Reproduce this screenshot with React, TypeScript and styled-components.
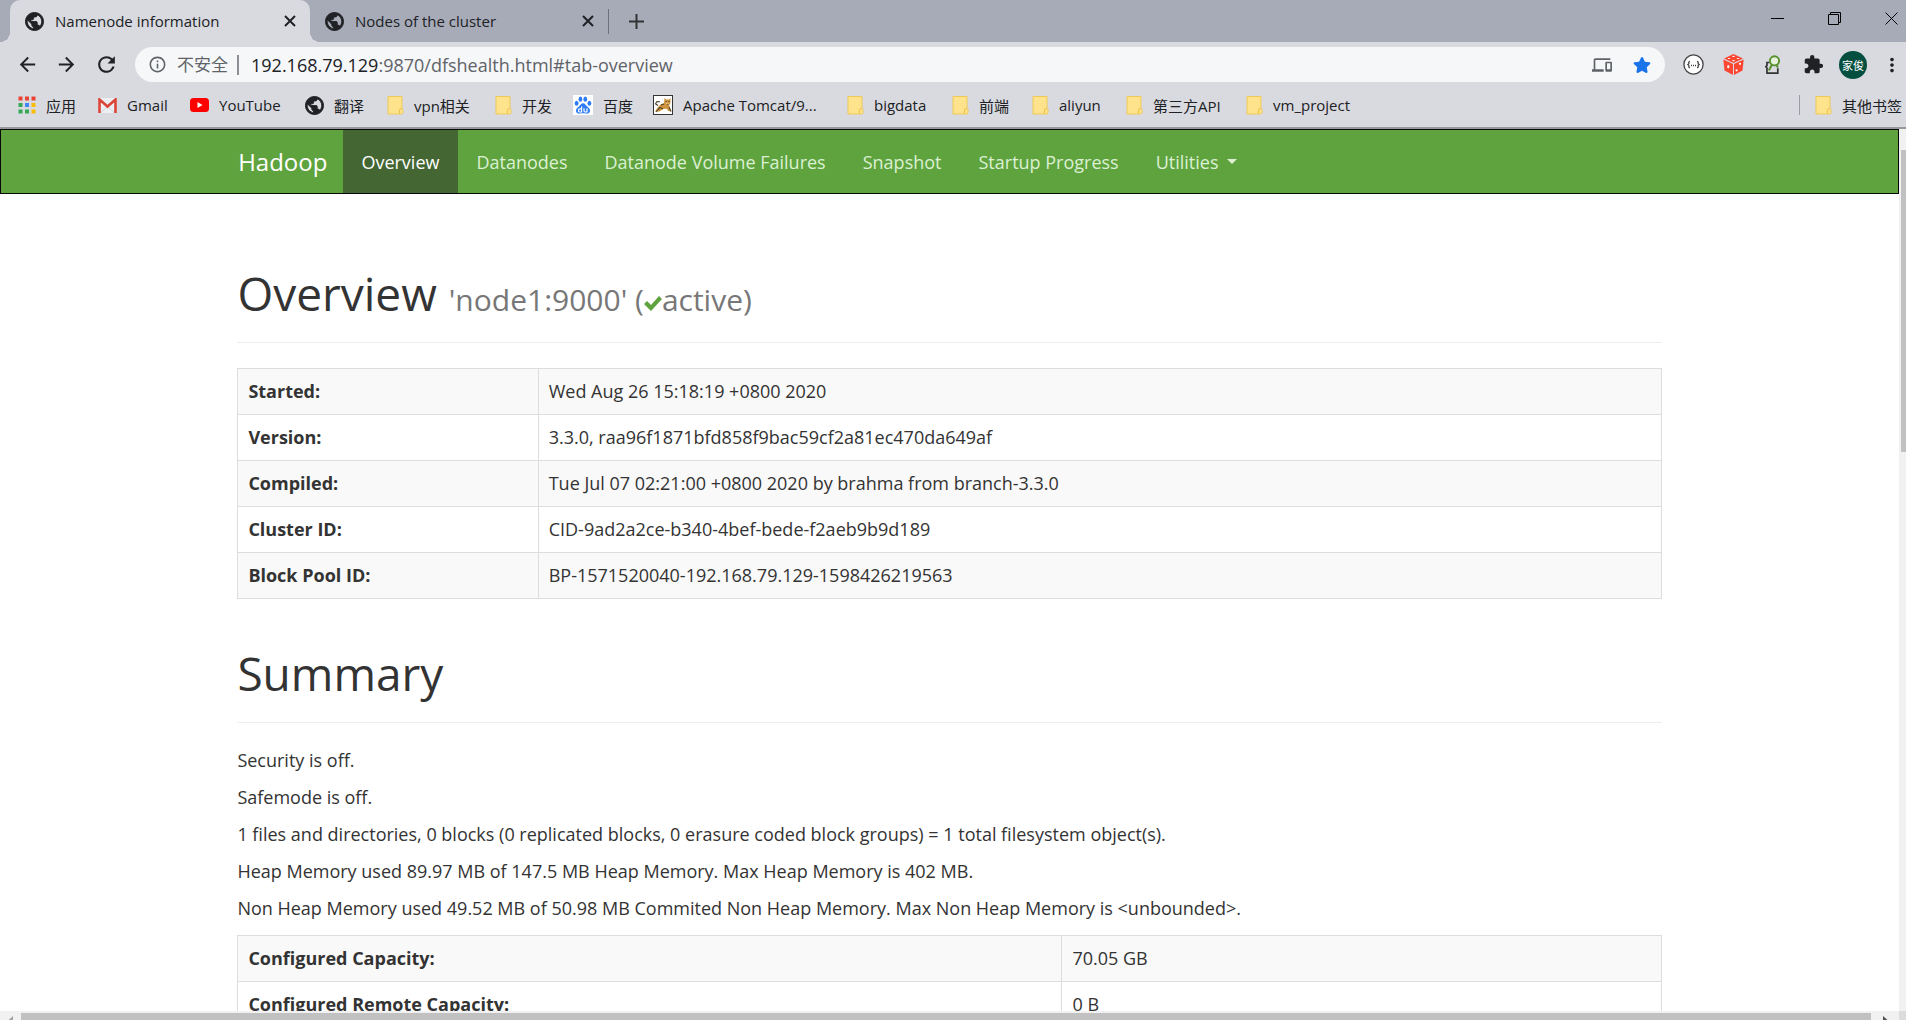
import React from 'react';
import styled, { createGlobalStyle } from 'styled-components';
import { FaStar } from 'react-icons/fa';
import { MdDevices, MdRefresh, MdArrowBack, MdArrowForward, MdInfoOutline, MdMoreVert, MdExtension } from 'react-icons/md';

const ui = `"Open Sans", "Noto Sans CJK SC", sans-serif`;

const Global = createGlobalStyle`
  *, *::before, *::after { box-sizing: border-box; }
  html, body { margin: 0; height: 100%; overflow: hidden; }
  body { font-family: ${ui}; color: #333; background: #fff; }
  #root { height: 100%; }
  button { border: 0; padding: 0; background: none; color: inherit; font: inherit; display: inline-flex; align-items: center; justify-content: center; }
  a { color: inherit; text-decoration: none; }
  svg { display: block; flex: none; }
`;

const Window = styled.div`
  display: flex;
  flex-direction: column;
  height: 100vh;
`;

const TabStrip = styled.header`
  display: flex;
  height: 42px;
  padding-left: 10px;
  background: #a7abb8;
  flex: none;
`;

const Tab = styled.div<{ $active?: boolean }>`
  position: relative;
  display: flex;
  align-items: center;
  width: ${p => (p.$active ? 300 : 298)}px;
  padding: 0 14px 0 15px;
  gap: 11px;
  color: #202124;
  font-size: 15px;
  border-radius: 10px 10px 0 0;
  background: ${p => (p.$active ? '#d8dadf' : 'transparent')};
  ${p =>
    p.$active &&
    `&::before, &::after {
      content: '';
      position: absolute;
      bottom: 0;
      width: 10px;
      height: 10px;
    }
    &::before { left: -10px; background: radial-gradient(circle at 0 0, transparent 10px, #d8dadf 10px); }
    &::after { right: -10px; background: radial-gradient(circle at 100% 0, transparent 10px, #d8dadf 10px); }`}
`;

const TabTitle = styled.span`
  flex: 1;
  white-space: nowrap;
`;

const TabDivider = styled.span`
  width: 1px;
  height: 25px;
  margin: 9px 20px 0 0;
  background: #6c707b;
`;

const WindowControls = styled.div`
  display: flex;
  align-items: center;
  margin-left: auto;
  padding: 0 8px 6px 0;
  gap: 44px;
  color: #000;
`;

const Toolbar = styled.div`
  display: flex;
  align-items: center;
  height: 45px;
  padding: 0 3px 0 16px;
  background: #d8dadf;
  color: #202124;
  flex: none;
`;

const NavButtons = styled.div`
  display: flex;
  gap: 16px;
  margin-right: 16px;
`;

const AddressBar = styled.form`
  display: flex;
  align-items: center;
  flex: 1;
  height: 35px;
  padding: 0 14px 0 13px;
  border-radius: 18px;
  background: #f6f7f9;
  color: #5f6368;
  font-size: 18px;
`;

const Insecure = styled.span`
  margin-left: 10px;
  padding-right: 9px;
  border-right: 2px solid #8b8e93;
  font-size: 17px;
  line-height: 20px;
`;

const Address = styled.div`
  position: relative;
  flex: 1;
  height: 24px;
  margin-left: 12px;
  line-height: 24px;
`;

const AddressText = styled.div`
  white-space: pre;
  b { color: #202124; font-weight: 400; }
`;

const AddressInput = styled.input`
  position: absolute;
  inset: 0;
  width: 100%;
  border: 0;
  padding: 0;
  outline: 0;
  background: transparent;
  color: transparent;
  font: inherit;
`;

const AddressActions = styled.div`
  display: flex;
  gap: 21px;
`;

const Extensions = styled.div`
  display: grid;
  grid-template-columns: repeat(5, 40px) 30px;
  place-items: center;
  margin-left: 8px;
  & > :last-child { justify-self: end; }
`;

const Avatar = styled.button`
  && {
    width: 28px;
    height: 28px;
    border-radius: 50%;
    background: #044f40;
    color: #fff;
    font-size: 11px;
  }
`;

const Bookmarks = styled.nav`
  display: flex;
  align-items: center;
  height: 40px;
  padding: 0 0 4px 18px;
  background: #d8dadf;
  color: #202124;
  font-size: 15px;
  white-space: nowrap;
  flex: none;
`;

const Bookmark = styled.a<{ $width?: number }>`
  display: flex;
  align-items: center;
  gap: 10px;
  width: ${p => p.$width}px;
  flex: none;
`;

const OtherBookmarks = styled.a`
  display: flex;
  align-items: center;
  gap: 10px;
  height: 20px;
  margin-left: auto;
  padding: 0 4px 0 15px;
  border-left: 1px solid #9a9da5;
`;

const Viewport = styled.div`
  display: grid;
  grid-template: minmax(0, 1fr) 9px / minmax(0, 1fr) 7px;
  flex: 1;
  min-height: 0;
  border-top: 2px solid #98989c;
`;

const Page = styled.div`
  overflow: hidden;
`;

const ScrollY = styled.div`
  padding: 21px 0 0 2px;
  background: #f1f1f1;
`;

const ThumbY = styled.div`
  height: 35.1%;
  background: #c1c1c1;
`;

const ScrollX = styled.div`
  display: grid;
  grid-template-columns: 21px 1fr 28px;
  padding-top: 2px;
  background: #f1f1f1;
  overflow: hidden;
`;

const Arrow = styled.svg<{ $color: string }>`
  justify-self: center;
  margin-top: 3px;
  fill: ${p => p.$color};
`;

const ThumbX = styled.div`
  background: #c1c1c1;
`;

const Corner = styled.div`
  background: #dcdcdc;
`;

const Navbar = styled.nav`
  border: 1px solid #080808;
  background: #5fa33e;
`;

const Container = styled.div`
  width: 75%;
  min-width: 1000px;
  margin: 0 auto;
`;

const NavRow = styled(Container)`
  display: flex;
  height: 63px;
  font-size: 18px;
`;

const Brand = styled.a`
  display: flex;
  align-items: center;
  padding-right: 16px;
  color: #fff;
  font-size: 24px;
`;

const NavLink = styled.a<{ $active?: boolean }>`
  display: flex;
  align-items: center;
  gap: 8px;
  padding: 0 19px 0 18px;
  white-space: nowrap;
  color: ${p => (p.$active ? '#fff' : '#dcf0d3')};
  background: ${p => (p.$active ? '#446633' : 'transparent')};
`;

const Caret = styled.span`
  border: 5px solid transparent;
  border-top-color: currentColor;
  border-bottom: 0;
`;

const Section = styled.section`
  padding-top: 44px;
`;

const OverviewSection = styled(Section)`
  padding-top: 69px;
`;

const PageHeader = styled.header`
  padding-bottom: 19px;
  margin-bottom: 25px;
  border-bottom: 1px solid #eee;
`;

const Heading = styled.h1`
  margin: 0;
  font-size: 46px;
  font-weight: 400;
  line-height: 60px;
  small { color: #777; font-size: 30px; line-height: 30px; }
`;

const Check = styled.svg`
  display: inline-block;
`;

const Table = styled.table`
  width: 100%;
  table-layout: fixed;
  border-collapse: collapse;
  font-size: 18px;
  line-height: 25px;
  th, td {
    height: 46px;
    padding: 10px;
    border: 1px solid #ddd;
    text-align: left;
    white-space: nowrap;
  }
  tr:nth-child(odd) { background: #f9f9f9; }
`;

const KeyHead = styled.th<{ $share: number }>`
  width: ${p => p.$share}%;
  font-weight: 700;
`;

const Summary = styled.div`
  display: grid;
  gap: 12px;
  margin-bottom: 14px;
`;

const Para = styled.p`
  margin: 0;
  font-size: 18px;
  line-height: 25px;
`;

const Globe = () => (
  <svg width="19" height="19" viewBox="1.500 1.500 21 21">
    <path
      fill="#202124"
      stroke="#202124"
      strokeWidth="1"
      d="M12 2C6.480 2 2 6.480 2 12s4.480 10 10 10 10-4.480 10-10S17.520 2 12 2zm-1 17.930c-3.950-.490-7-3.850-7-7.930 0-.620.080-1.210.210-1.790L9 15v1c0 1.100.900 2 2 2v1.930zm6.900-2.540c-.260-.810-1-1.390-1.900-1.390h-1v-3c0-.550-.450-1-1-1H8v-2h2c.550 0 1-.450 1-1V7h2c1.100 0 2-.900 2-2v-.410c2.930 1.190 5 4.060 5 7.410 0 2.080-.800 3.970-2.100 5.390z"
    />
  </svg>
);

const Folder = () => (
  <svg width="17" height="19" viewBox="0 0 17 19">
    <path d="M1 .5h14v12l1 1v3.500l-1 1H1z" fill="#ffe38c" stroke="#eec95a" />
    <path d="M12.500 17.500v-3.300q0-1.700 2.500-1.700" fill="none" stroke="#e9bf48" />
  </svg>
);

const AppsIcon = () => (
  <svg width="18" height="18" viewBox="0 0 18 18">
    {['#ea4335', '#ea4335', '#ea4335', '#34a853', '#4285f4', '#fbbc05', '#34a853', '#34a853', '#fbbc05'].map((c, i) => (
      <rect key={i} x={(i % 3) * 6.500 + 0.5} y={Math.floor(i / 3) * 6.500 + 0.5} width="4" height="4" fill={c} />
    ))}
  </svg>
);

const GmailIcon = () => (
  <svg width="19" height="15" viewBox="0 0 19 15">
    <rect width="19" height="15" rx="1" fill="#eceff1" />
    <path d="M3 14.500L9.500 8.500 16 14.500" fill="none" stroke="#cfd3d6" />
    <path d="M1.500 15V1.500L9.500 8.500 17.500 1.500V15" fill="none" stroke="#db4437" strokeWidth="2.600" />
  </svg>
);

const YouTubeIcon = () => (
  <svg width="19" height="14" viewBox="0 0 19 14">
    <rect width="19" height="14" rx="3.500" fill="#f00" />
    <path d="M7.500 4v6l5-3z" fill="#fff" />
  </svg>
);

const BaiduIcon = () => (
  <svg width="20" height="20" viewBox="0 0 20 20">
    <rect width="20" height="20" fill="#fff" />
    <g fill="#2f7df6">
      <ellipse cx="3.600" cy="8.300" rx="1.900" ry="2.500" />
      <ellipse cx="7.400" cy="4.200" rx="1.900" ry="2.600" />
      <ellipse cx="12.300" cy="4.200" rx="1.900" ry="2.600" />
      <ellipse cx="16.400" cy="8.300" rx="1.900" ry="2.500" />
      <path d="M10 8.200c2 0 2.800 2 4.200 3.200 1.800 1.500 3.200 2.700 2.800 4.900-.4 2.100-2.200 2.700-4 2.300-2-.4-4-.4-6 0-1.800.4-3.600-.2-4-2.300-.4-2.200 1-3.400 2.800-4.900C7.200 10.200 8 8.200 10 8.200z" />
    </g>
    <path d="M8.600 11.500v5.500H6.800q-1.300 0-1.300-1.600t1.300-1.600h1.800M11 13.300v2.500q0 1.200 1.200 1.200h1.800v-3.700" fill="none" stroke="#fff" strokeWidth="1.200" />
  </svg>
);

const TomcatIcon = () => (
  <svg width="20" height="20" viewBox="0 0 20 20">
    <rect x=".5" y=".5" width="19" height="19" fill="#fff" stroke="#333" />
    <path d="M11.500 3l1.800 1.500h2.400L17.500 3v5l-1.300 2 .8 3.500 1.500 3-3-.5-2-2.300-3.500.3-3.500 2.500H2l3-4.500 2.800-2.700 3.200-1z" fill="#cf9440" />
    <path d="M5 10.500L2.500 8.800 4 6.500l3 .2M3 17l4-4.500 3 1.500M16 12l2 4.500M8 10l3-1" fill="none" stroke="#4d4028" strokeWidth="1.100" />
    <path d="M12.700 6.500h.9M15.600 6.500h.9M14 9h1.400" stroke="#3a2e18" strokeWidth="1.100" />
    <path d="M12.500 7.500l2 .8 2-.8-.8 1.200h-2.400z" fill="#f5df8d" />
  </svg>
);

const BracesIcon = () => (
  <svg width="21" height="21" viewBox="0 0 21 21" fill="none" stroke="#444" strokeWidth="1.300">
    <circle cx="10.500" cy="10.500" r="9.600" fill="#fff" />
    <path d="M7 7.300q-1.200 0-1.200 1.300v1.100l-1 .8 1 .8v1.100q0 1.300 1.200 1.300M14 7.300q1.200 0 1.200 1.300v1.100l1 .8-1 .8v1.100q0 1.300-1.200 1.300" />
    <path d="M8 11.500h5" strokeDasharray="1 1" />
  </svg>
);

const DiceIcon = () => (
  <svg width="21" height="21" viewBox="0 0 21 21">
    <g fill="#fb4632">
      <path d="M10.500 0L20 4.400 10.500 9 1 4.400z" />
      <path d="M.3 5.400L10 10v11L1.500 16.600z" />
      <path d="M20.700 5.400L11 10v11l8.500-4.400z" />
    </g>
    <g fill="#fff">
      <ellipse cx="10.500" cy="2.300" rx="1.300" ry=".6" /><ellipse cx="6" cy="4.500" rx="1.300" ry=".6" />
      <ellipse cx="15" cy="4.500" rx="1.300" ry=".6" /><ellipse cx="10.500" cy="6.700" rx="1.300" ry=".6" />
      <ellipse cx="5.300" cy="12.700" rx="1.100" ry="1.600" /><circle cx="17" cy="9.800" r="1.100" /><circle cx="13.600" cy="16.300" r="1.100" />
    </g>
  </svg>
);

const LensIcon = () => (
  <svg width="16" height="20" viewBox="0 0 16 20" fill="none">
    <path d="M4.500 7.500H2v3L.8 11.700 2 13v5.200h10.800v-5" stroke="#333" strokeWidth="1.700" />
    <circle cx="9.500" cy="5.800" r="4.600" fill="#e5f1db" stroke="#578f2b" strokeWidth="1.900" />
    <path d="M7 9.800L3.800 15.500M11.500 10.300l1.500 2.200" stroke="#578f2b" strokeWidth="2" />
  </svg>
);

const bookmarks: { label: string; icon: React.ReactNode; width: number }[] = [
  { label: '应用', icon: <AppsIcon />, width: 80 },
  { label: 'Gmail', icon: <GmailIcon />, width: 92 },
  { label: 'YouTube', icon: <YouTubeIcon />, width: 115 },
  { label: '翻译', icon: <Globe />, width: 82 },
  { label: 'vpn相关', icon: <Folder />, width: 108 },
  { label: '开发', icon: <Folder />, width: 78 },
  { label: '百度', icon: <BaiduIcon />, width: 80 },
  { label: 'Apache Tomcat/9...', icon: <TomcatIcon />, width: 194 },
  { label: 'bigdata', icon: <Folder />, width: 105 },
  { label: '前端', icon: <Folder />, width: 80 },
  { label: 'aliyun', icon: <Folder />, width: 94 },
  { label: '第三方API', icon: <Folder />, width: 120 },
  { label: 'vm_project', icon: <Folder />, width: 120 },
];

const overviewRows = [
  ['Started:', 'Wed Aug 26 15:18:19 +0800 2020'],
  ['Version:', '3.3.0, raa96f1871bfd858f9bac59cf2a81ec470da649af'],
  ['Compiled:', 'Tue Jul 07 02:21:00 +0800 2020 by brahma from branch-3.3.0'],
  ['Cluster ID:', 'CID-9ad2a2ce-b340-4bef-bede-f2aeb9b9d189'],
  ['Block Pool ID:', 'BP-1571520040-192.168.79.129-1598426219563'],
];

const capacityRows = [
  ['Configured Capacity:', '70.05 GB'],
  ['Configured Remote Capacity:', '0 B'],
];

const summary = [
  'Security is off.',
  'Safemode is off.',
  '1 files and directories, 0 blocks (0 replicated blocks, 0 erasure coded block groups) = 1 total filesystem object(s).',
  'Heap Memory used 89.97 MB of 147.5 MB Heap Memory. Max Heap Memory is 402 MB.',
  'Non Heap Memory used 49.52 MB of 50.98 MB Commited Non Heap Memory. Max Non Heap Memory is <unbounded>.',
];

const DataTable = ({ rows, share }: { rows: string[][]; share: number }) => (
  <Table>
    <tbody>
      {rows.map(([key, value]) => (
        <tr key={key}>
          <KeyHead scope="row" $share={share}>{key}</KeyHead>
          <td>{value}</td>
        </tr>
      ))}
    </tbody>
  </Table>
);

const CloseTab = () => (
  <button aria-label="Close tab">
    <svg width="12" height="12" stroke="currentColor" strokeWidth="2"><path d="M1 1l10 10M11 1L1 11" /></svg>
  </button>
);

export default function App() {
  return (
    <Window>
      <Global />
      <TabStrip>
        <Tab $active>
          <Globe />
          <TabTitle>Namenode information</TabTitle>
          <CloseTab />
        </Tab>
        <Tab>
          <Globe />
          <TabTitle>Nodes of the cluster</TabTitle>
          <CloseTab />
        </Tab>
        <TabDivider />
        <button aria-label="New tab">
          <svg width="15" height="15" stroke="currentColor" strokeWidth="2"><path d="M7.500 0v15M0 7.500h15" /></svg>
        </button>
        <WindowControls>
          <button aria-label="Minimize">
            <svg width="13" height="13"><path d="M0 6.500h13" stroke="currentColor" /></svg>
          </button>
          <button aria-label="Restore">
            <svg width="13" height="13" fill="none" stroke="currentColor"><path d="M.5 2.500h10v10h-10zM2.500 2.500v-2h10v10h-2" /></svg>
          </button>
          <button aria-label="Close">
            <svg width="13" height="13" stroke="currentColor"><path d="M.5.500l12 12M12.500.500l-12 12" /></svg>
          </button>
        </WindowControls>
      </TabStrip>

      <Toolbar>
        <NavButtons>
          <button aria-label="Back"><MdArrowBack size={23} /></button>
          <button aria-label="Forward"><MdArrowForward size={23} /></button>
          <button aria-label="Reload"><MdRefresh size={25} /></button>
        </NavButtons>
        <AddressBar>
          <MdInfoOutline size={19} />
          <Insecure>不安全</Insecure>
          <Address>
            <AddressText><b>192.168.79.129</b>:9870/dfshealth.html#tab-overview</AddressText>
            <AddressInput aria-label="Address" />
          </Address>
          <AddressActions>
            <button type="button" aria-label="Send to device"><MdDevices size={20} /></button>
            <button type="button" aria-label="Bookmark"><FaStar size={18} color="#1a73e8" /></button>
          </AddressActions>
        </AddressBar>
        <Extensions>
          <button aria-label="JSON viewer"><BracesIcon /></button>
          <button aria-label="Dice"><DiceIcon /></button>
          <button aria-label="Inspector"><LensIcon /></button>
          <button aria-label="Extensions"><MdExtension size={21} /></button>
          <Avatar>家俊</Avatar>
          <button aria-label="Menu"><MdMoreVert size={22} /></button>
        </Extensions>
      </Toolbar>

      <Bookmarks>
        {bookmarks.map(b => (
          <Bookmark key={b.label} href="#" $width={b.width}>{b.icon}<span>{b.label}</span></Bookmark>
        ))}
        <OtherBookmarks href="#"><Folder /><span>其他书签</span></OtherBookmarks>
      </Bookmarks>

      <Viewport>
        <Page>
          <Navbar>
            <NavRow>
              <Brand href="#">Hadoop</Brand>
              <NavLink href="#tab-overview" $active>Overview</NavLink>
              <NavLink href="#tab-datanode">Datanodes</NavLink>
              <NavLink href="#tab-volumes">Datanode Volume Failures</NavLink>
              <NavLink href="#tab-snapshot">Snapshot</NavLink>
              <NavLink href="#tab-startup">Startup Progress</NavLink>
              <NavLink href="#utilities">Utilities <Caret /></NavLink>
            </NavRow>
          </Navbar>
          <Container as="main">
            <OverviewSection>
              <PageHeader>
                <Heading>
                  Overview <small>'node1:9000' (<Check width="18" height="16" viewBox="0 0 18 16"><path d="M0 9l3-3 4 4 8-9 3 3L7 16z" fill="#5fa33e" /></Check>active)</small>
                </Heading>
              </PageHeader>
              <DataTable rows={overviewRows} share={21.1} />
            </OverviewSection>
            <Section>
              <PageHeader>
                <Heading>Summary</Heading>
              </PageHeader>
              <Summary>
                {summary.map(s => <Para key={s}>{s}</Para>)}
              </Summary>
              <DataTable rows={capacityRows} share={57.9} />
            </Section>
          </Container>
        </Page>
        <ScrollY><ThumbY /></ScrollY>
        <ScrollX>
          <Arrow $color="#a3a3a3" width="5" height="9"><path d="M5 0v9L0 4.500z" /></Arrow>
          <ThumbX />
          <Arrow $color="#505050" width="5" height="9"><path d="M0 0v9l5-4.500z" /></Arrow>
        </ScrollX>
        <Corner />
      </Viewport>
    </Window>
  );
}
